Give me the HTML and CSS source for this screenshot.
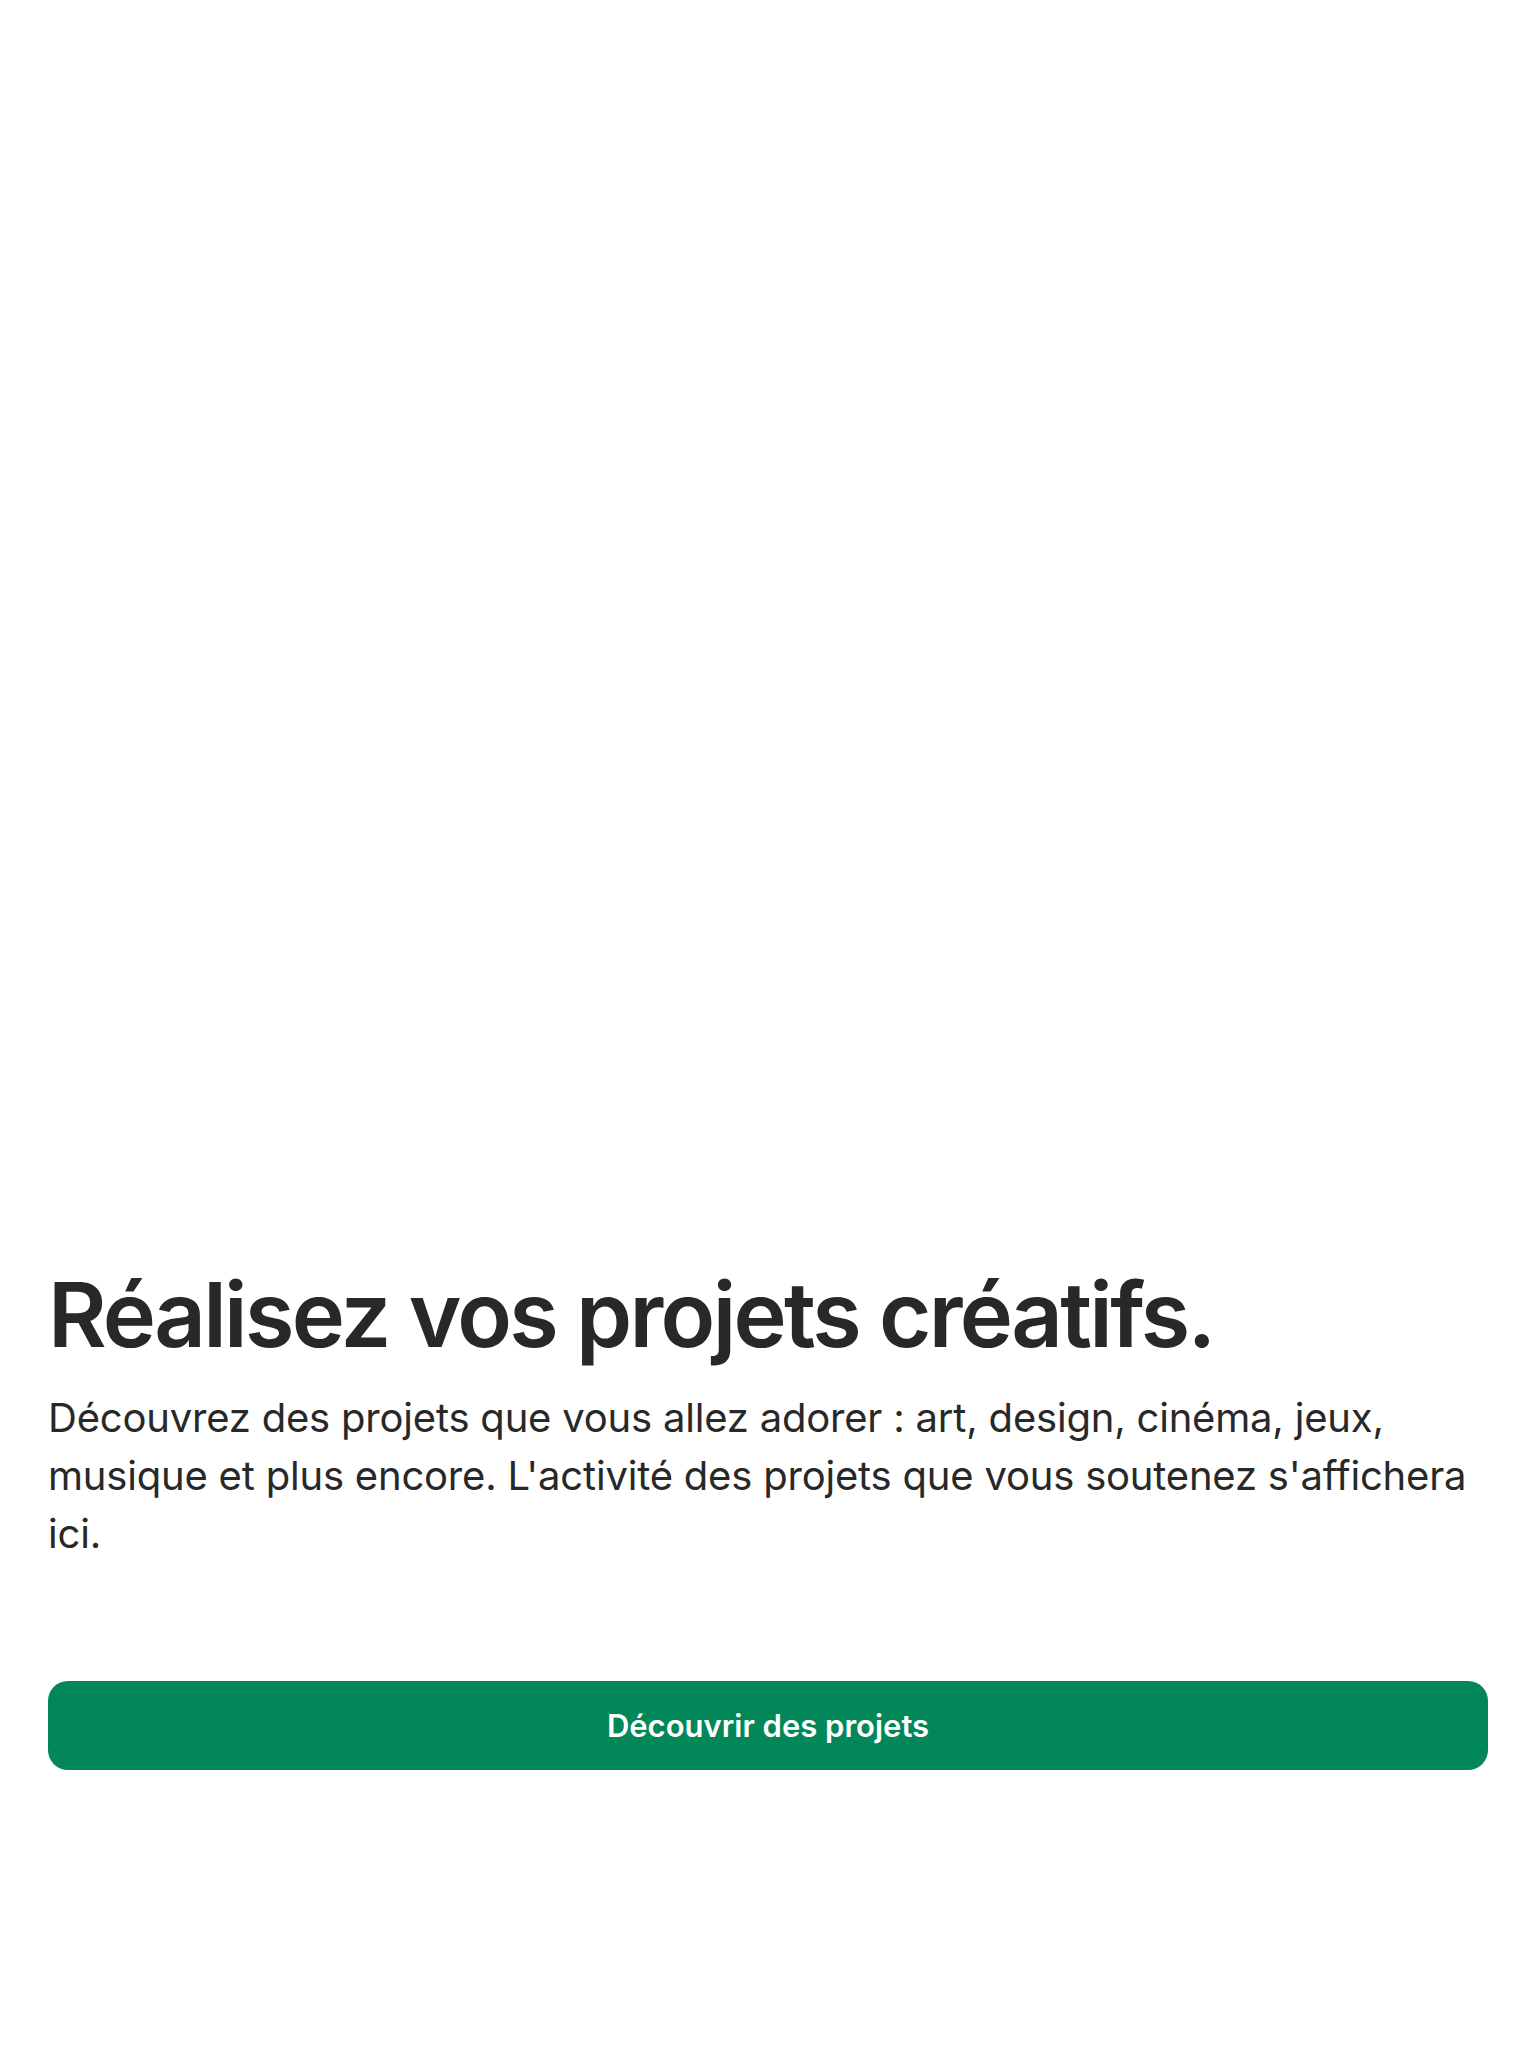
FILE: index.html
```html
<!DOCTYPE html>
<html lang="fr">
<head>
<meta charset="utf-8">
<title>Réalisez vos projets créatifs.</title>
<link rel="stylesheet" href="styles.css">
</head>
<body>
<main class="page">
  <section class="empty-state">
    <h1 class="title">Réalisez vos projets créatifs.</h1>
    <p class="lead">Découvrez des projets que vous allez adorer : art, design, cinéma, jeux, musique et plus encore. L'activité des projets que vous soutenez s'affichera ici.</p>
    <button class="cta" type="button">Découvrir des projets</button>
  </section>
</main>
</body>
</html>
```

FILE: styles.css
```css
* { box-sizing: border-box; }
html, body { margin: 0; padding: 0; background: #ffffff; }
body { font-family: Inter, "Noto Sans", sans-serif; color: #282828; }
.page {
  min-height: 2048px;
  display: flex;
  flex-direction: column;
  justify-content: flex-end;
  padding: 0 48px 278px;
}
.empty-state { display: flex; flex-direction: column; }
.title {
  margin: 0;
  font-size: 90px;
  font-weight: 600;
  line-height: 100px;
  letter-spacing: -2.7px;
}
.lead {
  margin: 24px 0 0;
  font-size: 40px;
  line-height: 58px;
  font-weight: 400;
  letter-spacing: -0.2px;
}
.cta {
  margin-top: 118px;
  height: 89px;
  width: 100%;
  border: none;
  border-radius: 20px;
  background: #028858;
  color: #ffffff;
  font-family: Inter, "Noto Sans", sans-serif;
  font-size: 31px;
  font-weight: 600;
}
```
